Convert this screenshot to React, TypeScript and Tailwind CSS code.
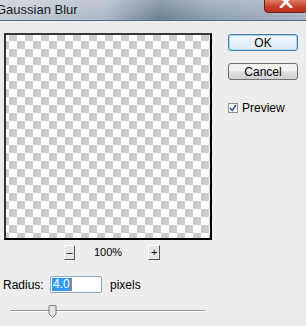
export default function App() {
  return (
    <div className="w-[306px] h-[326px] overflow-hidden bg-[#ededed] font-['Liberation_Sans',Arial,sans-serif] text-[12px] text-black flex flex-col">
      {/* title bar */}
      <div className="relative h-[21px] shrink-0 border-b border-[#55657a] bg-[linear-gradient(to_right,#c3ccd6_0%,#aab6c4_35%,#6d7e93_52%,#8c9cae_68%,#a7b4c2_100%)]">
        <div className="absolute inset-0 bg-[linear-gradient(to_bottom,rgba(255,255,255,0.25),rgba(255,255,255,0))]" />
        <span className="relative block ml-[-4px] pt-[3px] text-[13px] leading-[14px] text-[#1a1a1a]">Gaussian Blur</span>
        <div className="absolute right-[-2px] top-[-2px] w-[44px] h-[15px] rounded-b-[4px] border border-[#6b1e12] bg-[linear-gradient(to_bottom,#e0866f,#c5402a_60%,#b8301d)] flex justify-center">
          <svg width="14" height="12" viewBox="0 0 14 12" className="mt-[-3px]">
            <path d="M2 1 L12 11 M12 1 L2 11" stroke="#fff" strokeWidth="2.6" strokeLinecap="square" />
          </svg>
        </div>
      </div>

      <div className="flex pt-[12px]">
        {/* left column */}
        <div className="flex flex-col pl-[4px] w-[228px] shrink-0">
          <div className="w-[208px] h-[207px] border-2 border-t-[#333] border-l-[#333] border-r-black border-b-black bg-[conic-gradient(#cccccc_25%,#ffffff_0_50%,#cccccc_0_75%,#ffffff_0)] bg-[length:16px_16px] bg-[position:-5px_-2px]" />

          <div className="flex items-center h-[16px] mt-[4px]">
            <div className="ml-[60px] w-[11px] h-[15px] border-t border-l border-white border-r border-b border-r-[#555] border-b-[#555] bg-[#e6e6e6] flex items-center justify-center text-[11px] leading-none">
              –
            </div>
            <span className="ml-[19px] text-[11px]">100%</span>
            <div className="ml-[26px] w-[12px] h-[15px] border-t border-l border-white border-r border-b border-r-[#555] border-b-[#555] bg-[#e6e6e6] flex items-center justify-center text-[11px] leading-none">
              +
            </div>
          </div>

          <div className="flex items-center h-[17px] mt-[16px]">
            <span className="ml-[-1px] w-[47px]">Radius:</span>
            <div className="w-[52px] h-[17px] border border-[#8fa8c2] rounded-[2px] bg-white flex items-center pl-[1px]">
              <span className="bg-[#3399ff] text-white px-[1px] leading-[13px] border-r border-[#d07a20]">4.0</span>
            </div>
            <span className="ml-[8px]">pixels</span>
          </div>

          <div className="relative h-[12px] mt-[12px] ml-[6px] w-[195px] flex items-center">
            <div className="w-full h-[2px] border-t border-[#9a9a9a] border-b border-b-white" />
            <svg className="absolute left-[38px] top-0" width="9" height="13" viewBox="0 0 9 13">
              <path d="M1 1.5 Q1 0.5 2 0.5 H7 Q8 0.5 8 1.5 V9 L4.5 12.5 L1 9 Z" fill="#e4e4e4" stroke="#7a7a7a" />
            </svg>
          </div>
        </div>

        {/* right column */}
        <div className="flex flex-col">
          <div className="mt-[1px] w-[70px] h-[17px] rounded-[3px] border border-[#3c7fb1] bg-[linear-gradient(to_bottom,#f4f9fd,#dbe9f5)] shadow-[inset_0_0_0_1px_#a6d5f7] flex items-center justify-center">
            OK
          </div>
          <div className="mt-[12px] w-[70px] h-[17px] rounded-[3px] border border-[#707070] bg-[linear-gradient(to_bottom,#f3f3f3_45%,#dddddd_55%,#d0d0d0)] flex items-center justify-center">
            Cancel
          </div>
          <div className="mt-[19px] flex items-center">
            <div className="w-[10px] h-[10px] border border-[#8e8f8f] bg-white flex items-center justify-center">
              <svg width="8" height="8" viewBox="0 0 8 8">
                <path d="M1 4 L3.2 6.5 L7 1" fill="none" stroke="#2b55a0" strokeWidth="1.6" />
              </svg>
            </div>
            <span className="ml-[4px]">Preview</span>
          </div>
        </div>
      </div>
    </div>
  );
}
